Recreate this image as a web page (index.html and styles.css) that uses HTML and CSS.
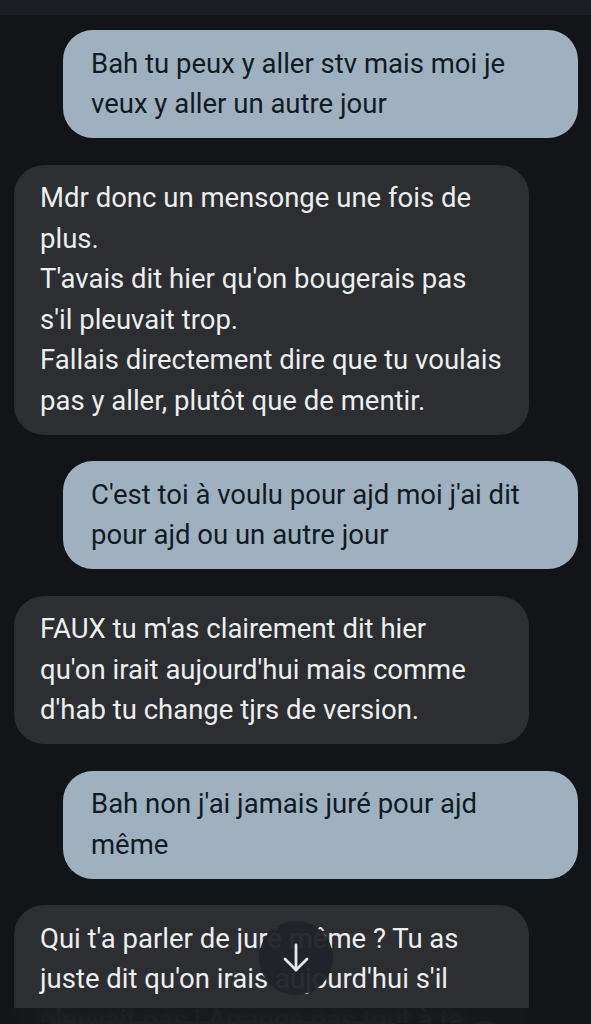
FILE: index.html
```html
<!DOCTYPE html>
<html lang="fr">
<head>
    <meta charset="UTF-8">
    <meta name="viewport" content="width=device-width, initial-scale=1.0">
    <title>Messages</title>
    <link rel="stylesheet" href="styles.css">
</head>
<body>
    <div class="topbar"></div>

    <div class="chat">
        <div class="msg sent">Bah tu peux y aller stv mais moi je veux y aller un autre jour</div>

        <div class="msg received">Mdr donc un mensonge une fois de plus.<br>T'avais dit hier qu'on bougerais pas s'il pleuvait trop.<br>Fallais directement dire que tu voulais pas y aller, plutôt que de mentir.</div>

        <div class="msg sent">C'est toi à voulu pour ajd moi j'ai dit pour ajd ou un autre jour</div>

        <div class="msg received">FAUX tu m'as clairement dit hier<br>qu'on irait aujourd'hui mais comme d'hab tu change tjrs de version.</div>

        <div class="msg sent">Bah non j'ai jamais juré pour ajd même</div>

        <div class="msg received">Qui t'a parler de juré même ? Tu as juste dit qu'on irais aujourd'hui s'il pleuvait pas ! Arrange pas tout à ta sauce.</div>
    </div>

    <button class="scroll-down" aria-label="Descendre">
        <svg width="32" height="32" viewBox="0 0 32 32" fill="none" stroke="#e3e6ea" stroke-width="2.8" stroke-linecap="round" stroke-linejoin="round">
            <path d="M16 3 V28"/>
            <path d="M5 17 L16 28 L27 17"/>
        </svg>
    </button>

    <div class="composer">
        <div class="composer-input"></div>
        <div class="composer-btn"></div>
    </div>
</body>
</html>
```

FILE: styles.css
```css
body {
    margin: 0;
    background-color: #121417;
    font-family: Roboto, "Noto Sans", sans-serif;
    overflow: hidden;
    height: 1024px;
}
.topbar {
    height: 15px;
    background: #1b1e24;
}
.chat {
    display: flex;
    flex-direction: column;
    gap: 26.5px;
    padding: 15px 13px 0 14px;
    height: 993px;
    overflow: hidden;
}
.msg {
    box-sizing: border-box;
    flex-shrink: 0;
    width: 515px;
    font-size: 27.5px;
    line-height: 40.5px;
    border-radius: 30px;
}
.sent {
    align-self: flex-end;
    background: #9fb1be;
    color: #121a22;
    padding: 13.5px 40px 13.5px 28px;
}
.received {
    align-self: flex-start;
    background: #2c2e31;
    color: #eceef0;
    padding: 13.5px 26px 13.5px 26px;
}
.scroll-down {
    position: fixed;
    left: 259px;
    top: 921px;
    width: 74px;
    height: 74px;
    border: none;
    border-radius: 50%;
    background: rgba(32, 36, 42, 0.96);
    display: flex;
    align-items: center;
    justify-content: center;
    padding: 0;
}
.composer {
    position: fixed;
    left: 0;
    right: 0;
    top: 1008px;
    height: 40px;
    background: rgba(20, 22, 25, 0.9);
    backdrop-filter: blur(6px);
    display: flex;
    gap: 50px;
    padding: 13px 0 0 35px;
}
.composer-input {
    width: 375px;
    height: 50px;
    border-radius: 25px;
    background: #1d2024;
}
.composer-btn {
    width: 50px;
    height: 50px;
    border-radius: 50%;
    background: #1d2024;
}
```
